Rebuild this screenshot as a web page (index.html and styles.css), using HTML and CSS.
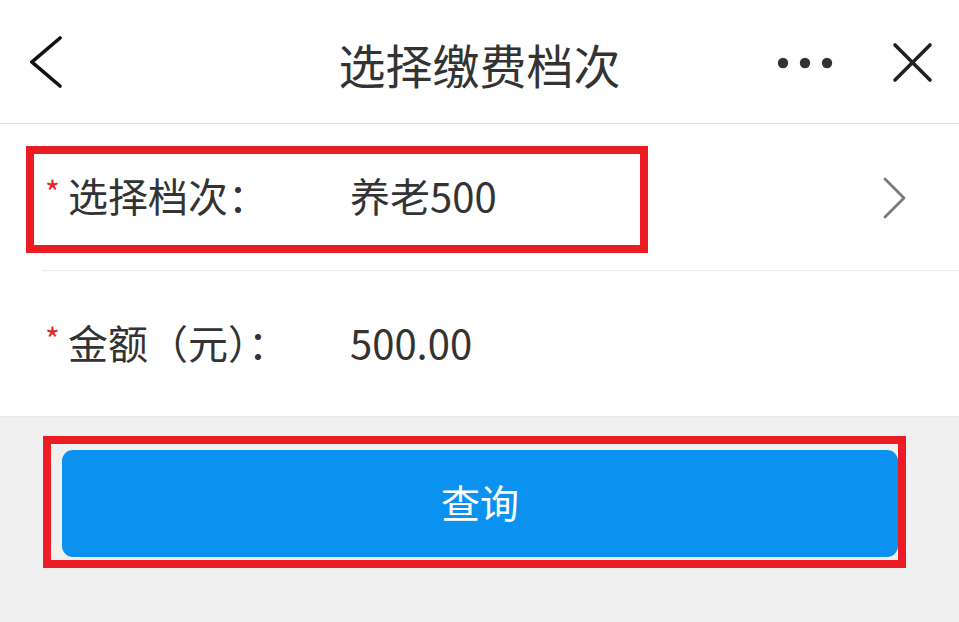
FILE: index.html
```html
<!DOCTYPE html>
<html lang="zh-CN">
<head>
<meta charset="utf-8">
<title>选择缴费档次</title>
<link rel="stylesheet" href="styles.css">
</head>
<body>
<header class="topbar">
  <div class="topbar-left">
    <svg class="icon-back" width="36" height="56" viewBox="0 0 36 56"><polyline points="30,4 2,28 30,52" fill="none" stroke="#111" stroke-width="3.6" stroke-linecap="round" stroke-linejoin="miter"/></svg>
  </div>
  <h1 class="title">选择缴费档次</h1>
  <div class="topbar-right">
    <svg class="icon-more" width="60" height="14" viewBox="0 0 60 14"><circle cx="7" cy="7" r="5.2" fill="#333"/><circle cx="29" cy="7" r="5.2" fill="#333"/><circle cx="51" cy="7" r="5.2" fill="#333"/></svg>
    <svg class="icon-close" width="41" height="41" viewBox="0 0 41 41"><path d="M3 3 L38 38 M38 3 L3 38" fill="none" stroke="#222" stroke-width="3.6" stroke-linecap="round"/></svg>
  </div>
</header>

<section class="form">
  <div class="row row-first">
    <span class="star">*</span>
    <span class="label">选择档次：</span>
    <span class="value">养老500</span>
    <svg class="icon-arrow" width="24" height="42" viewBox="0 0 24 42"><polyline points="2,2 21,21 2,40" fill="none" stroke="#7a7a7a" stroke-width="2.8" stroke-linecap="round" stroke-linejoin="round"/></svg>
    <div class="mark mark-row"></div>
  </div>
  <div class="row row-last">
    <span class="star">*</span>
    <span class="label">金额（元）：</span>
    <span class="value">500.00</span>
  </div>
</section>

<div class="actions">
  <button class="btn-query" type="button">查询</button>
  <div class="mark mark-btn"></div>
</div>
</body>
</html>
```

FILE: styles.css
```css
html, body {
  margin: 0;
  padding: 0;
}
body {
  width: 959px;
  height: 622px;
  overflow: hidden;
  background: #f0f0f0;
  font-family: "Noto Sans CJK SC", "Noto Sans", sans-serif;
  color: #333;
}

.topbar {
  height: 123px;
  border-bottom: 1px solid #e3e3e3;
  background: #fff;
  display: grid;
  grid-template-columns: 1fr auto 1fr;
  align-items: center;
}
.topbar-left {
  display: flex;
  align-items: center;
  padding-left: 30px;
  padding-top: 1px;
}
.icon-back { display: block; }
.title {
  margin: 0;
  font-size: 47px;
  font-weight: 400;
  color: #333;
  line-height: 1;
  padding-top: 4px;
}
.topbar-right {
  display: flex;
  align-items: center;
  justify-content: flex-end;
  padding-right: 26px;
  gap: 56px;
  padding-top: 2px;
}
.icon-more, .icon-close { display: block; }

.form {
  background: #fff;
}
.row {
  position: relative;
  height: 146px;
  margin-left: 42px;
  display: flex;
  align-items: center;
  padding-left: 3px;
  padding-right: 52px;
  font-size: 40px;
  line-height: 1;
}
.row-first {
  border-bottom: 1px solid #ebebeb;
}
.row-last {
  height: 145px;
  margin-left: 0;
  padding-left: 45px;
  border-bottom: 1px solid #e9e9e9;
}
.star {
  width: 23px;
  color: #e3262b;
  font-size: 32px;
  align-self: center;
  margin-top: -12px;
}
.label {
  width: 282px;
  color: #333;
  padding-bottom: 4px;
}
.value {
  flex: 1;
  color: #333;
  padding-bottom: 4px;
}
.icon-arrow {
  display: block;
  margin-top: 2px;
}

.actions {
  position: relative;
  margin: 33px 61px 0 62px;
}
.btn-query {
  display: block;
  width: 100%;
  height: 107px;
  border: none;
  border-radius: 11px;
  background: #0b91ef;
  color: #fff;
  font-family: "Noto Sans CJK SC", "Noto Sans", sans-serif;
  font-size: 39px;
  line-height: 1;
  padding: 0 0 4px;
}

.mark {
  position: absolute;
  border: 8px solid #ec1c24;
  box-sizing: border-box;
  pointer-events: none;
}
.mark-row {
  left: -16px;
  top: 22px;
  width: 622px;
  height: 107px;
}
.mark-btn {
  left: -19px;
  top: -14px;
  right: -8px;
  bottom: -11px;
}
```
